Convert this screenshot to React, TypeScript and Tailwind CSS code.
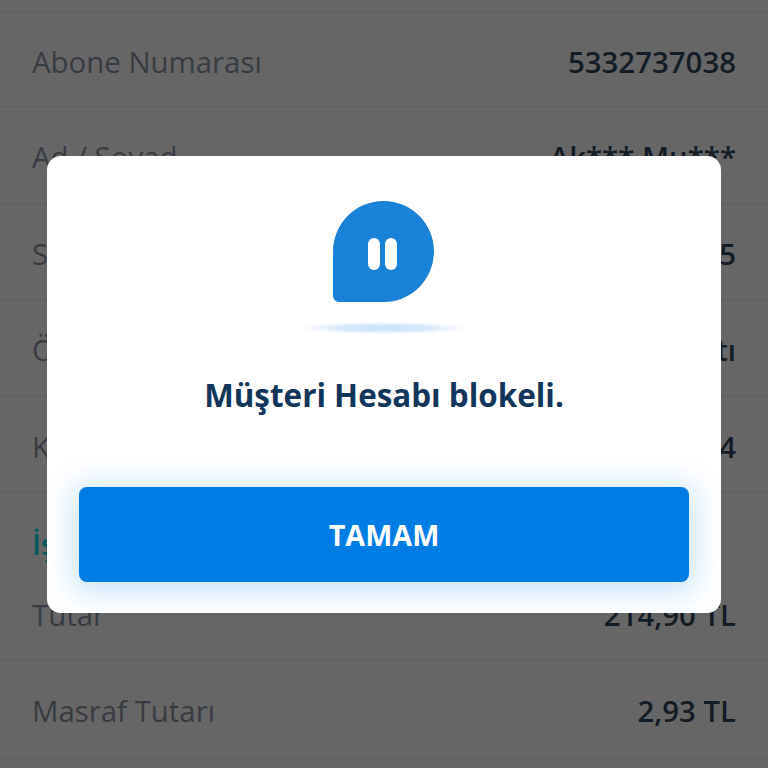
const rows = [
    { label: 'Abone Numarası', value: '5332737038', height: 'h-[94px]' },
    { label: 'Ad / Soyad', value: 'Ak*** Mu***', height: 'h-[96.5px]' },
    { label: 'Seri No', value: '12345', height: 'h-[96.5px]' },
    { label: 'Ödeme Tipi', value: 'Faturalı Hattı', height: 'h-[96.5px]' },
    { label: 'Kurum Kodu', value: '1234', height: 'h-[96.5px]' },
];

function Row({ label, value, className }: { label: string; value: string; className: string }) {
    return (
        <div className={`flex items-center justify-between px-8 border-b border-[#5e5e5e] ${className}`}>
            <span className="text-[29.4px] text-[#383c42]">{label}</span>
            <span className="text-[29.4px] font-semibold text-[#141c26]">{value}</span>
        </div>
    );
}

function PauseBubble() {
    return (
        <svg width="101" height="101" viewBox="0 0 101 101" className="block">
            <path d="M50.5 0a50.5 50.5 0 0 1 0 101H6a6 6 0 0 1-6-6V50.5A50.5 50.5 0 0 1 50.5 0z" fill="#1a82d6" />
            <rect x="35" y="37" width="12" height="32" rx="6" fill="#fff" />
            <rect x="52" y="37" width="12" height="32" rx="6" fill="#fff" />
        </svg>
    );
}

export default function App() {
    return (
        <div className="relative w-[768px] h-[768px] overflow-hidden bg-[#666666] font-['Open_Sans',sans-serif]">
            <div className="h-[13px] border-b border-[#5e5e5e]" />
            {rows.map(row => (
                <Row key={row.label} label={row.label} value={row.value} className={`${row.height} pt-[5px]`} />
            ))}
            <div className="h-[83px] flex items-end px-8 pb-[10px]">
                <span className="text-[29.4px] font-semibold text-[#055a5e]">İşlem Bilgileri</span>
            </div>
            <Row label="Tutar" value="214,90 TL" className="h-[84.5px] !items-end pb-[22px]" />
            <Row label="Masraf Tutarı" value="2,93 TL" className="h-[98px] pt-[5px]" />

            <div className="absolute left-[47px] top-[156px] w-[674px] h-[457px] rounded-[14px] bg-white flex flex-col items-center overflow-hidden">
                <div className="mt-[45px] -ml-px">
                    <PauseBubble />
                </div>
                <div className="mt-[20px] w-[164px] h-[12px] bg-[radial-gradient(ellipse_closest-side,#c9e0f8_0%,#d8e9fb_55%,#ffffff_100%)]" />
                <h2 className="mt-[42px] text-[31.4px] leading-[38px] font-bold text-[#12355b]">Müşteri Hesabı blokeli.</h2>
                <button className="mt-[73px] w-[610px] h-[94.5px] rounded-lg bg-[#007de5] text-white text-[28.8px] font-bold shadow-[0_4px_30px_6px_rgba(0,125,229,0.22)]">
                    TAMAM
                </button>
            </div>
        </div>
    );
}
